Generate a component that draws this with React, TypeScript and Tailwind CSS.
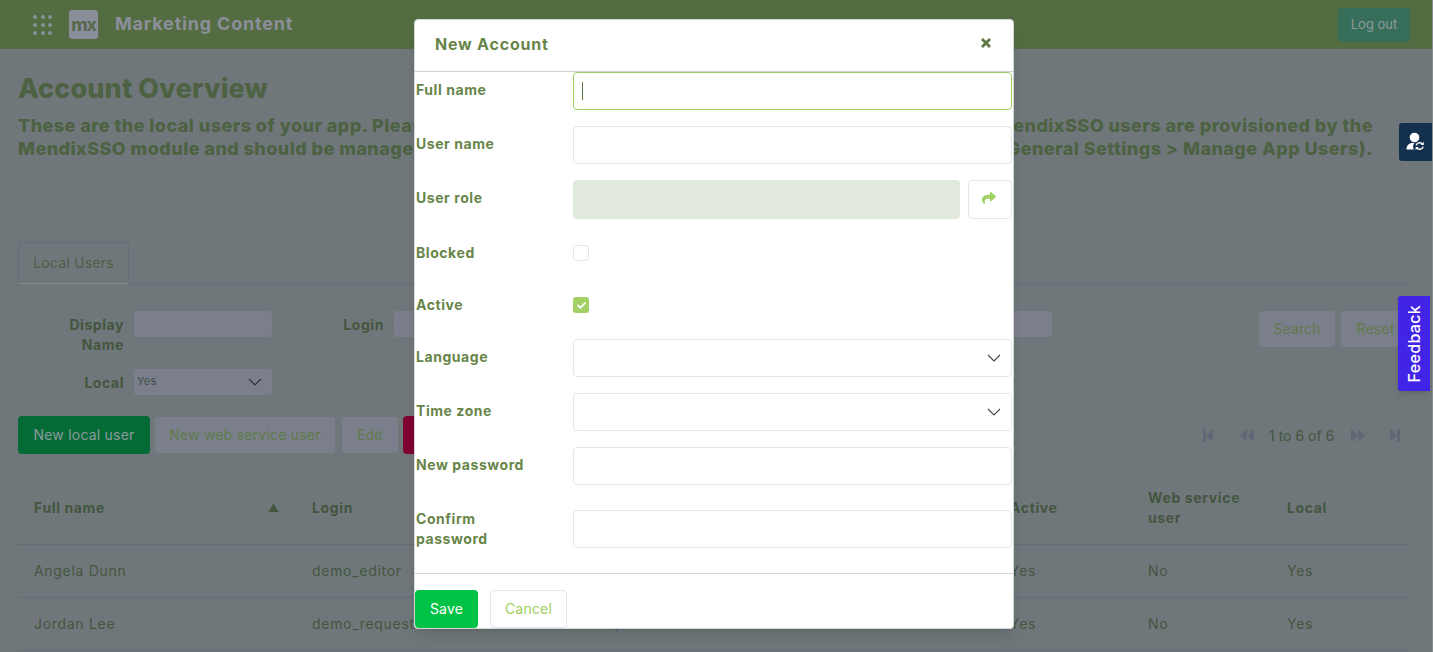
import React from 'react';
import { FaShare, FaCheck } from 'react-icons/fa';

const Dots = () => (
  <div className="grid grid-cols-3 gap-x-[4px] gap-y-[4px] w-[19px]">
    {Array.from({ length: 9 }).map((_, i) => (
      <span key={i} className="w-[4px] h-[4px] rounded-full bg-[#8b8f9b]" />
    ))}
  </div>
);

const Chevron = ({ color = '#3f444a' }: { color?: string }) => (
  <svg width="14" height="8" viewBox="0 0 14 8" fill="none" stroke={color} strokeWidth="1.1">
    <path d="M1 1l6 6 6-6" />
  </svg>
);

const PagerIcon = ({ kind }: { kind: 'first' | 'prev' | 'next' | 'last' }) => {
  const shapes = {
    first: <><rect x="0" y="0" width="3" height="13" /><polygon points="10,0 10,13 3,6.5" /></>,
    prev: <><polygon points="7,0 7,13 0,6.5" /><polygon points="14,0 14,13 7,6.5" /></>,
    next: <><polygon points="0,0 0,13 7,6.5" /><polygon points="7,0 7,13 14,6.5" /></>,
    last: <><polygon points="0,0 0,13 7,6.5" /><rect x="7" y="0" width="3" height="13" /></>,
  };
  const w = kind === 'first' || kind === 'last' ? 10 : 14;
  return (
    <svg width={w} height="13" viewBox={`0 0 ${w} 13`} fill="#5f6874" className="block">
      {shapes[kind]}
    </svg>
  );
};

const SyncUser = () => (
  <svg width="20" height="20" viewBox="0 0 20 20" fill="none">
    <circle cx="8.5" cy="5.5" r="4.8" fill="#fff" />
    <path d="M0.5 17.5c0-4 2.5-6.5 6-6.5h2c-1.5 1.5-2 4.5-.6 6.5z" fill="#fff" />
    <path d="M10.2 13.4a3.6 3.6 0 0 1 6-1.6" stroke="#fff" strokeWidth="1.4" />
    <path d="M17.2 14.6a3.6 3.6 0 0 1-6 1.6" stroke="#fff" strokeWidth="1.4" />
    <polygon points="17.8,9.8 17.8,13 14.6,13" fill="#fff" />
    <polygon points="9.6,18.2 9.6,15 12.8,15" fill="#fff" />
  </svg>
);

const TextField = ({ focused }: { focused?: boolean }) => (
  <div
    className={`flex-1 h-[38px] rounded-[4px] border bg-white flex items-center pl-[8px] ${
      focused ? 'border-[#9fcf63]' : 'border-[#e4e6e8]'
    }`}
  >
    {focused && <span className="w-[1px] h-[18px] bg-[#5f7a45]" />}
  </div>
);

const SelectField = () => (
  <div className="flex-1 h-[38px] rounded-[4px] border border-[#e4e6e8] bg-white flex items-center justify-end pr-[10px]">
    <Chevron />
  </div>
);

const Row = ({
  label,
  children,
  cls,
  labelCls,
}: {
  label: React.ReactNode;
  children: React.ReactNode;
  cls?: string;
  labelCls?: string;
}) => (
  <div className={`flex items-center mb-[16px] ${cls ?? ''}`}>
    <label className={`w-[157px] shrink-0 pr-[40px] text-[14px] leading-[20px] font-bold tracking-[0.04em] text-[#688549] ${labelCls ?? '-mt-[2px]'}`}>
      {label}
    </label>
    {children}
  </div>
);

const users = [
  { name: 'Angela Dunn', login: 'demo_editor', role: 'Editor' },
  { name: 'Jordan Lee', login: 'demo_requester', role: 'Requester' },
];

const tableCols = 'grid grid-cols-[278px_279px_419px_138px_139px_1fr] items-center';

export default function App() {
  return (
    <div className="relative h-screen overflow-hidden bg-[#70777a] border-r border-[#848c90] font-['Inter',sans-serif] tracking-[0.015em] text-[14px] text-[#43563f]">
      {/* top bar */}
      <header className="h-[49px] bg-[#546c42] flex items-center pl-[33px] pr-[22px]">
        <Dots />
        <div className="ml-[17px] w-[29px] h-[29px] rounded-[3px] bg-[#8a8d9a] flex items-center justify-center text-[18px] font-bold tracking-[-0.06em] text-[#55694a]">
          mx
        </div>
        <div className="ml-[17px] -mt-[3px] text-[18px] font-bold tracking-[0.045em] text-[#8b8f9b]">Marketing Content</div>
        <button className="ml-auto w-[72px] h-[34px] rounded-[4px] bg-[#376e5a] text-[13px] tracking-normal text-[#8f9a9f]">Log out</button>
      </header>

      <main className="pl-[18px] pr-[22px]">
        <h1 className="pt-[23px] text-[27px] leading-[34px] font-extrabold tracking-[0.005em] text-[#4c6242]">Account Overview</h1>
        <div className="mt-[8px] text-[18px] leading-[23px] font-extrabold tracking-[0.025em] text-[#4c6242]">
          <div className="flex justify-between pr-[37px]">
            <span>These are the local users of your app. Please note</span>
            <span>MendixSSO users are provisioned by the</span>
          </div>
          <div className="flex justify-between pr-[37px]">
            <span>MendixSSO module and should be managed</span>
            <span>General Settings &gt; Manage App Users).</span>
          </div>
        </div>

        {/* tabs */}
        <div className="mt-[82px] h-[42px] border-b border-[#676d77] flex">
          <div className="w-[111px] h-[42px] pb-[2px] rounded-t-[4px] border border-[#676d77] border-b-[#848c90] flex items-center justify-center text-[#4c5f49]">
            Local Users
          </div>
        </div>

        {/* search */}
        <div className="mt-[27px] flex items-start">
          <div className="w-[106px] text-right font-bold tracking-[0.04em] leading-[20px] pt-[4px]">Display<br />Name</div>
          <div className="ml-[10px] w-[138px] h-[26px] rounded-[3px] bg-[#7b7f8b]" />
          <div className="w-[112px] text-right font-bold tracking-[0.04em] leading-[20px] pt-[4px]">Login</div>
          <div className="ml-[10px] w-[138px] h-[26px] rounded-[3px] bg-[#7b7f8b]" />
          <div className="ml-[382px] w-[138px] h-[26px] rounded-[3px] bg-[#7b7f8b]" />
          <button className="ml-[207px] w-[76px] h-[36px] pb-[2px] rounded-[3px] bg-[#7b7f8b] text-[#5f7a4a]">Search</button>
          <button className="ml-[6px] w-[69px] h-[36px] pb-[2px] rounded-[3px] bg-[#7b7f8b] text-[#5f7a4a]">Reset</button>
        </div>
        <div className="mt-[14px] flex items-start">
          <div className="w-[106px] text-right font-bold tracking-[0.04em] leading-[20px] pt-[4px]">Local</div>
          <div className="ml-[10px] w-[138px] h-[26px] rounded-[3px] bg-[#7b7f8b] flex items-center justify-between pl-[3px] pr-[10px] text-[11px] text-[#3f4f45]">
            <span className="-mt-[2px]">Yes</span>
            <Chevron color="#2e3338" />
          </div>
        </div>

        {/* toolbar */}
        <div className="mt-[21px] flex items-center">
          <button className="w-[132px] h-[38px] pb-[2px] rounded-[4px] bg-[#056b36] text-[#8d9a9c]">New local user</button>
          <button className="ml-[5px] w-[180px] h-[36px] pb-[1px] rounded-[3px] bg-[#7b7f8b] text-[#5f7a4a]">New web service user</button>
          <button className="ml-[7px] w-[56px] h-[36px] pb-[1px] rounded-[3px] bg-[#7b7f8b] text-[#5f7a4a]">Edit</button>
          <button className="ml-[5px] w-[70px] h-[38px] rounded-[4px] bg-[#7e0432] text-[#8d9a9c]">Delete</button>
          <div className="ml-auto mr-[10px] flex items-center">
            <PagerIcon kind="first" />
            <span className="ml-[27px]"><PagerIcon kind="prev" /></span>
            <span className="ml-[15px] tracking-normal w-[65px] text-center whitespace-nowrap">1 to 6 of 6</span>
            <span className="ml-[17px]"><PagerIcon kind="next" /></span>
            <span className="ml-[25px]"><PagerIcon kind="last" /></span>
          </div>
        </div>

        {/* table */}
        <div className={`${tableCols} mt-[18px] h-[73px] border-b border-[#676d77] font-bold tracking-[0.045em] leading-[20px]`}>
          <div className="px-[16px] flex items-center justify-between">
            <span>Full name</span>
            <span className="text-[11px]">▲</span>
          </div>
          <div className="px-[16px]">Login</div>
          <div className="px-[16px]">Role</div>
          <div className="px-[16px]">Active</div>
          <div className="px-[16px]">Web service user</div>
          <div className="px-[16px]">Local</div>
        </div>
        {users.map((u) => (
          <div key={u.login} className={`${tableCols} h-[53px] pb-[2px] border-b border-[#676d77] tracking-[0.05em]`}>
            <div className="px-[16px]">{u.name}</div>
            <div className="px-[16px]">{u.login}</div>
            <div className="px-[16px] -mt-[2px]">{u.role}</div>
            <div className="px-[16px]">Yes</div>
            <div className="px-[16px]">No</div>
            <div className="px-[16px]">Yes</div>
          </div>
        ))}
      </main>

      {/* side widgets */}
      <div className="absolute -right-px top-[123px] w-[34px] h-[38px] rounded-l-[3px] bg-[#14304f] flex items-center justify-center">
        <SyncUser />
      </div>
      <div className="absolute right-[2px] top-[296px] w-[32px] h-[95px] rounded-l-[3px] bg-[#4224e8] shadow-md flex items-center justify-center">
        <span className="[writing-mode:vertical-rl] rotate-180 text-[16px] font-medium tracking-[0.02em] text-white">Feedback</span>
      </div>

      {/* modal */}
      <div className="absolute left-[414px] top-[19px] w-[600px] h-[610px] rounded-[4px] border border-[#d5d8d8] bg-white shadow-lg">
        <div className="h-[52px] border-b border-[#cfd2d2] flex items-center justify-between pl-[20px] pr-[22px]">
          <h2 className="-mt-[3px] text-[16px] font-bold tracking-[0.05em] text-[#688549]">New Account</h2>
          <svg width="10" height="10" viewBox="0 0 10 10" stroke="#5b7741" strokeWidth="2.8" className="-mt-[6px]">
            <path d="M1 1l8 8M9 1l-8 8" />
          </svg>
        </div>
        <div className="px-[1px]">
          <Row label="Full name"><TextField focused /></Row>
          <Row label="User name"><TextField /></Row>
          <Row label="User role" labelCls="-mt-[3px]">
            <div className="flex-1 h-[39px] rounded-[4px] bg-[#e1e8dc]" />
            <div className="ml-[8px] w-[44px] h-[39px] rounded-[4px] border border-[#e4e6e8] bg-white flex items-center justify-center">
              <FaShare size={14} className="text-[#a0d05f] -mt-[3px] -ml-[2px]" />
            </div>
          </Row>
          <Row label="Blocked" cls="h-[36px]" labelCls="mt-0">
            <div className="w-[16px] h-[16px] rounded-[3px] border border-[#e4e6e8] bg-white" />
          </Row>
          <Row label="Active" cls="h-[36px]" labelCls="mt-0">
            <div className="w-[16px] h-[16px] rounded-[3px] bg-[#a3d166] flex items-center justify-center">
              <FaCheck size={9} className="text-white" />
            </div>
          </Row>
          <Row label="Language"><SelectField /></Row>
          <Row label="Time zone"><SelectField /></Row>
          <Row label="New password"><TextField /></Row>
          <Row label="Confirm password" cls="h-[56px]" labelCls="mt-0"><TextField /></Row>
        </div>
        <div className="border-t border-[#cfd2d2] pt-[16px] flex">
          <button className="w-[63px] h-[38px] pb-[1px] rounded-[4px] bg-[#00c244] text-white">Save</button>
          <button className="ml-[12px] w-[77px] h-[38px] pb-[1px] rounded-[4px] border border-[#e4e6e8] bg-white text-[#a0d05f]">Cancel</button>
        </div>
      </div>
    </div>
  );
}
